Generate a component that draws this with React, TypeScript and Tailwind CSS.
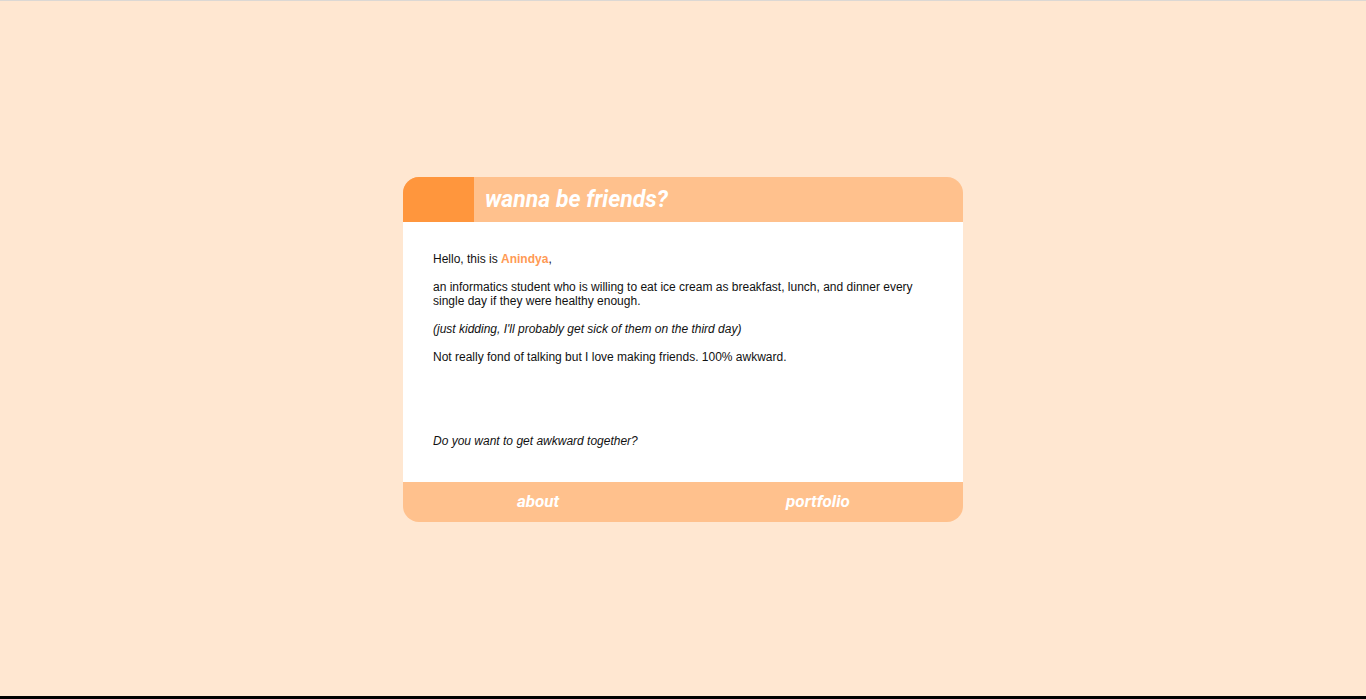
import React from "react";

const App: React.FC = () => {
    return (
        <div className="w-full h-[699px] bg-[#ffe7d1] border-t border-[#dcd8d4] border-b-[3px] border-b-black flex items-center justify-center font-['Liberation_Sans',Arial,sans-serif]">
            {/* Card */}
            <div className="w-[560px] rounded-[16px] overflow-hidden flex flex-col mt-[2px]">
                {/* Header */}
                <div className="h-[45px] bg-[#ffc18d] flex items-center">
                    <div className="w-[71px] h-full bg-[#ff963d]" />
                    <h1 className="ml-[11px] text-[23px] leading-none font-bold italic text-white font-['Roboto',sans-serif]">
                        wanna be friends?
                    </h1>
                </div>

                {/* Body */}
                <div className="bg-white px-[30px] pt-[30px] pb-[34px] text-[12px] leading-[14px] text-[#111] flex flex-col gap-[14px]">
                    <p>
                        Hello, this is <span className="font-bold text-[#ff9a55]">Anindya</span>,
                    </p>
                    <p>
                        an informatics student who is willing to eat ice cream as breakfast, lunch, and dinner every
                        single day if they were healthy enough.
                    </p>
                    <p className="italic">(just kidding, I'll probably get sick of them on the third day)</p>
                    <p>Not really fond of talking but I love making friends. 100% awkward.</p>
                    <p className="italic mt-[56px]">Do you want to get awkward together?</p>
                </div>

                {/* Footer */}
                <div className="h-[40px] bg-[#ffc18d] grid grid-cols-2 items-center text-white font-bold italic text-[17px] font-['Roboto',sans-serif]">
                    <a className="text-center pr-[10px]">about</a>
                    <a className="text-center pr-[10px]">portfolio</a>
                </div>
            </div>
        </div>
    );
};

export default App;
